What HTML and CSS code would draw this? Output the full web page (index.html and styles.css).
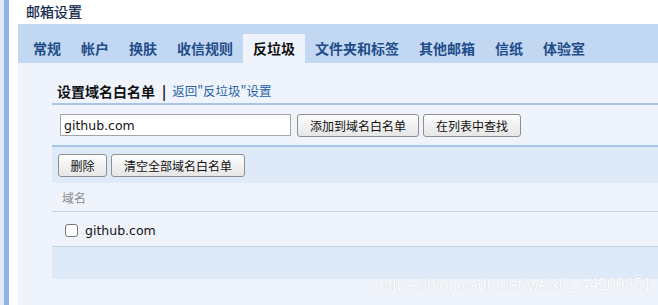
FILE: index.html
```html
<!DOCTYPE html>
<html lang="zh-CN">
<head>
  <meta charset="UTF-8">
  <title>邮箱设置</title>
  <link rel="stylesheet" href="styles.css">
</head>
<body>
  <div class="side"></div>
  <div class="main">
    <div class="title">邮箱设置</div>
    <div class="tabs">
      <span class="tab">常规</span>
      <span class="tab">帐户</span>
      <span class="tab">换肤</span>
      <span class="tab">收信规则</span>
      <span class="tab active">反垃圾</span>
      <span class="tab">文件夹和标签</span>
      <span class="tab">其他邮箱</span>
      <span class="tab">信纸</span>
      <span class="tab">体验室</span>
    </div>
    <div class="content">
      <div class="head">
        <b>设置域名白名单</b><b class="sep">|</b><a class="back">返回"反垃圾"设置</a>
      </div>
      <div class="search">
        <input class="domain" type="text" value="github.com">
        <button class="btn">添加到域名白名单</button>
        <button class="btn">在列表中查找</button>
      </div>
      <div class="toolbar">
        <button class="btn">删除</button>
        <button class="btn">清空全部域名白名单</button>
      </div>
      <div class="colhead">域名</div>
      <div class="row"><span class="box"></span><span class="name">github.com</span></div>
      <div class="foot"></div>
    </div>
  </div>
  <div class="mark">https://blog.csdn.net/weixin_44209851</div>
</body>
</html>
```

FILE: styles.css
```css
body {
  margin: 0;
  height: 305px;
  display: flex;
  overflow: hidden;
  font-family: "Noto Sans CJK SC", sans-serif;
  background: #fff;
}

.side {
  width: 18px;
  flex: none;
  background: linear-gradient(to right, #e3e9f2 0 4px, #8cb2e6 4px 9px, #fff 9px);
}

.main {
  flex: 1;
  display: flex;
  flex-direction: column;
}

.title {
  height: 24px;
  line-height: 22px;
  padding-left: 8px;
  font-size: 14px;
  color: #0f2748;
  -webkit-text-stroke: 0.25px #0f2748;
}

.tabs {
  height: 39px;
  background: #c2d8f2;
  padding-left: 5px;
  display: flex;
  align-items: flex-end;
}
.tab {
  height: 29px;
  line-height: 29px;
  padding: 0 10px;
  font-size: 14px;
  font-weight: bold;
  color: #1f4c8a;
}
.tab.active {
  background: #eff4fc;
  color: #111;
}

.content {
  flex: 1;
  background: #eff4fc;
  padding-left: 34px;
}

.head {
  height: 38px;
  border-bottom: 2px solid #a9c6ea;
  padding-left: 5px;
  display: flex;
  align-items: flex-end;
  padding-bottom: 2px;
  line-height: 20px;
  font-size: 14px;
  color: #111;
}
.sep { margin: 0 6px 0 7px; }
.back {
  font-size: 12.5px;
  color: #2563a6;
}

.search {
  height: 40px;
  border-bottom: 2px solid #a9c6ea;
  display: flex;
  align-items: center;
  gap: 5px;
  padding-left: 8px;
}
.domain {
  box-sizing: border-box;
  width: 231px;
  height: 22px;
  margin: 0 1px 0 0;
  padding: 0 3px;
  border: 1px solid #a5a5a5;
  background: #fff;
  font-family: "DejaVu Sans", sans-serif;
  font-size: 12.5px;
  color: #111;
}

.btn {
  box-sizing: border-box;
  height: 23px;
  padding: 0 12px;
  border: 1px solid #8f8f8f;
  border-radius: 3px;
  background: linear-gradient(#fdfdfd, #e6e6e6);
  font-family: "Noto Sans CJK SC", sans-serif;
  font-size: 12px;
  color: #111;
}
.search .btn + .btn { margin-left: -1px; }

.toolbar {
  height: 36px;
  background: #deeaf8;
  display: flex;
  align-items: center;
  gap: 4px;
  padding-left: 6px;
}
.toolbar .btn:first-child { width: 49px; padding: 0; }

.colhead {
  height: 28px;
  line-height: 29px;
  border-bottom: 1px solid #c6d3e1;
  padding-left: 10px;
  font-size: 12px;
  color: #8a8a8a;
}

.row {
  height: 35px;
  border-bottom: 1px solid #c6d3e1;
  display: flex;
  align-items: center;
  padding-left: 13px;
  padding-top: 2px;
  box-sizing: border-box;
}
.box {
  box-sizing: border-box;
  width: 13px;
  height: 13px;
  border: 1px solid #777;
  border-radius: 3px;
  background: #fff;
}
.name {
  margin-left: 7px;
  font-family: "DejaVu Sans", sans-serif;
  font-size: 12.5px;
  color: #111;
}

.foot {
  height: 32px;
  background: #deeaf8;
}

.mark {
  position: absolute;
  left: 379px;
  top: 276px;
  font-family: "Liberation Sans", sans-serif;
  font-size: 16px;
  color: #fff;
  text-shadow: 0 0 1px #b9c0ca;
}
```
